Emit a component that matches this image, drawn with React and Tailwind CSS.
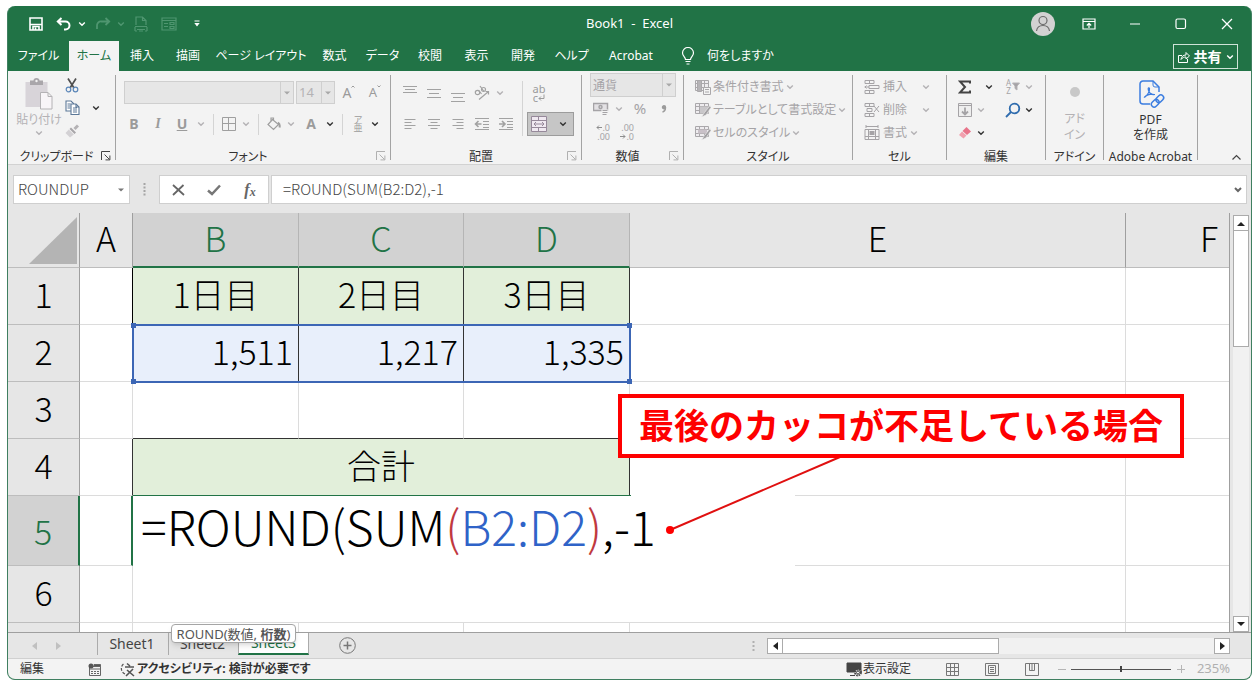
import React from "react";

const G = "#b4b2b5";

function Svg({ w = 16, h = 16, color = G, sw = 1, children }) {
  return (
    <svg
      width={w}
      height={h}
      viewBox={`0 0 ${w} ${h}`}
      fill="none"
      stroke={color}
      strokeWidth={sw}
      className="shrink-0"
      aria-hidden="true"
    >
      {children}
    </svg>
  );
}

function Chevron({ color = G }) {
  return (
    <Svg w={8} h={6} color={color} sw={1.4}>
      <path d="M1.2 1.4 4 4.2 6.8 1.4" />
    </Svg>
  );
}

function Caret({ color = "#a8a8a8" }) {
  return (
    <svg width="6" height="4" viewBox="0 0 6 4" className="shrink-0" aria-hidden="true">
      <path d="M0 0.500h6L3 3.500z" fill={color} />
    </svg>
  );
}

function Tool({ w, label, children }) {
  return (
    <button type="button" aria-label={label} className={`flex h-full shrink-0 items-center justify-center ${w}`}>
      {children}
    </button>
  );
}

function Divider({ w }) {
  return (
    <span className={`flex h-[21px] shrink-0 justify-center ${w}`}>
      <span className="h-full w-px bg-[#d4d4d4]" />
    </span>
  );
}

function Group({ width, label, launcher, children }) {
  return (
    <section aria-label={label} className={`my-1 flex shrink-0 flex-col border-r border-[#a3a3a3] ${width}`}>
      <div className="h-[74px]">{children}</div>
      <div className="flex h-[11px] items-center text-xs leading-[11px] whitespace-nowrap text-[#333]">
        <span className={`flex flex-1 justify-center pt-1 ${launcher ? "pl-1" : ""}`}>{label}</span>
        {launcher && (
          <button type="button" aria-label="詳細設定" className="w-[14px] pt-0.5">
            <Svg w={10} h={10} color={launcher}>
              <path d="M0.5 9V0.5H9M3.5 3.5l5 5M8.9 4.5v4.4H4.5" />
            </Svg>
          </button>
        )}
      </div>
    </section>
  );
}

/* ---------- title bar ---------- */

function TitleBar() {
  return (
    <header className="grid h-[35px] grid-cols-[1fr_auto_1fr] items-center text-white">
      <div className="flex items-center pl-5">
        <Tool w="w-4" label="上書き保存">
          <Svg w={14} h={14} color="#fff" sw={1.6}>
            <path d="M1 1h12v12H1zM1.500 7.500h11" />
            <path d="M4 13v-3.500h6V13M6.500 10.500V13" />
          </Svg>
        </Tool>
        <Tool w="ml-3 w-4" label="元に戻す">
          <Svg w={16} h={14} color="#fff" sw={2}>
            <path d="M5.5 1 1.8 4.5 5.5 8M2 4.5h7.5a4 4 0 0 1 0 8H8" />
          </Svg>
        </Tool>
        <Tool w="w-[19px]" label="元に戻す一覧"><Chevron color="#fff" /></Tool>
        <Tool w="ml-1 w-4" label="やり直し">
          <Svg w={16} h={14} color="#4f9670" sw={1.8}>
            <path d="M10.5 1l3.700 3.500L10.500 8M14 4.500H6.500a4 4 0 0 0-4.500 4.500v3" />
          </Svg>
        </Tool>
        <Tool w="w-[19px]" label="やり直し一覧"><Chevron color="#4f9670" /></Tool>
        <Tool w="ml-[3px] w-4" label="印刷プレビュー">
          <Svg w={14} h={16} color="#4f9670" sw={1.2}>
            <path d="M2 9V1h6.500L12 4.500V9M8.500 1v3.500H12M1 10.500h12M3 13.500h8M1 15h2M5 15h4M11 15h2M1 11v4M13 11v4" />
          </Svg>
        </Tool>
        <Tool w="ml-3 w-4" label="フォーム">
          <Svg w={16} h={14} color="#4f9670" sw={1.2}>
            <path d="M1 1h14v12H1zM1 3.500h14M3 6.500h4M3 9.500h4M9 5.500h4v2H9zM9 9.500h4v2H9z" />
          </Svg>
        </Tool>
        <Tool w="ml-3 w-4" label="クイック アクセスのカスタマイズ">
          <Svg w={6} h={7} color="#fff" sw={1.2}>
            <path d="M0.500 1h5M1.500 3.500h3L3 5.500z" fill="#fff" />
          </Svg>
        </Tool>
      </div>
      <h1 className="text-[13px] whitespace-pre">Book1  -  Excel</h1>
      <div className="flex h-full items-center justify-end pr-[15px]">
        <Tool w="w-6" label="アカウント">
          <Svg w={24} h={24} color="#6b6b6b" sw={1.2}>
            <circle cx="12" cy="12" r="12" fill="#d2d2d2" stroke="none" />
            <circle cx="12" cy="8.500" r="4" />
            <path d="M5.500 19c.5-4 3-5.500 6.500-5.500s6 1.500 6.500 5.500" />
          </Svg>
        </Tool>
        <Tool w="ml-[25px] w-[18px]" label="リボンの表示オプション">
          <Svg w={14} h={12} color="#fff" sw={1.2}>
            <path d="M1 1h12v10H1zM1 3.500h12M7 10V5.500M4.800 7.500 7 5.300l2.200 2.200" />
          </Svg>
        </Tool>
        <Tool w="ml-7 w-[18px]" label="最小化">
          <Svg w={12} h={12} color="#fff" sw={1.2}><path d="M1 6h10" /></Svg>
        </Tool>
        <Tool w="ml-7 w-[18px]" label="最大化">
          <Svg w={12} h={12} color="#fff" sw={1.2}><rect x="1" y="1" width="9.500" height="9.500" rx="1.500" /></Svg>
        </Tool>
        <Tool w="ml-7 w-[18px]" label="閉じる">
          <Svg w={12} h={12} color="#fff" sw={1.3}><path d="M1 1l10 10M11 1 1 11" /></Svg>
        </Tool>
      </div>
    </header>
  );
}

const TABS = [
  ["ファイル", "w-[61px]"],
  ["ホーム", "w-[50px]"],
  ["挿入", "w-[46px]"],
  ["描画", "w-[46px]"],
  ["ページ レイアウト", "w-[100px]"],
  ["数式", "w-[47px]"],
  ["データ", "w-[49px]"],
  ["校閲", "w-[46px]"],
  ["表示", "w-[47px]"],
  ["開発", "w-[46px]"],
  ["ヘルプ", "w-[51px]"],
  ["Acrobat", "w-[68px]"],
];

function RibbonTabs() {
  return (
    <nav className="-ml-px flex h-[30px] items-stretch pl-px text-xs whitespace-nowrap text-white">
      {TABS.map(([t, w]) => (
        <button
          key={t}
          type="button"
          className={`flex shrink-0 items-center justify-center ${w} ${t === "ホーム" ? "bg-[#f3f3f3] text-[#217346]" : ""}`}
        >
          {t}
        </button>
      ))}
      <button type="button" className="ml-4 flex items-center gap-3">
        <Svg w={14} h={18} color="#fff" sw={1.2}>
          <path d="M4.500 12.500c0-2.500-3-3.500-3-6.500a5.500 5.500 0 0 1 11 0c0 3-3 4-3 6.500zM4.500 14.500h5M5.500 17h3" />
        </Svg>
        何をしますか
      </button>
      <button
        type="button"
        className="mt-[3px] mr-[13px] mb-[2px] ml-auto flex w-[65px] items-center justify-center gap-1 border border-[#cfe3d7] text-sm font-bold"
      >
        <Svg w={12} h={12} color="#fff">
          <path d="M4 4.500H0.500v7h9V8M3 8.500c.5-3 2-4.500 5-4.500V1.500L11.500 5 8 8V6C6 6 4.500 6.500 3 8.500z" />
        </Svg>
        共有
        <Chevron color="#fff" />
      </button>
    </nav>
  );
}

/* ---------- ribbon ---------- */

function ClipboardGroup() {
  return (
    <Group width="w-[108px]" label="クリップボード" launcher="#444">
      <div className="flex pl-[9px] text-[#b4b2b5]">
        <button type="button" className="flex w-[44px] flex-col items-center pt-[3px] text-xs whitespace-nowrap">
          <Svg w={30} h={32} color="#b4b2b5">
            <path d="M1.500 4h22v25h-22z" fill="#d8d4d9" stroke="none" />
            <path d="M6 2.500h3.500a3 2.500 0 0 1 6 0H19V7H6z" fill="#a9a6aa" stroke="none" />
            <circle cx="12.500" cy="3" r="1.200" fill="#f3f3f3" stroke="none" />
            <path d="M16.500 14.500h7.500l4 4V31H16.500zM24 14.500v4h4" fill="#f8f5f8" />
          </Svg>
          <span className="leading-[20px]">貼り付け</span>
          <Chevron />
        </button>
        <div className="flex flex-col">
          <div className="flex h-[20px] pl-[3px]">
            <Tool w="w-4" label="切り取り">
              <Svg w={14} h={15} color="#505050" sw={1.7}>
                <path d="M3 0.500l6 9.500M11 0.500 5 10" />
                <circle cx="3.500" cy="11.500" r="2.300" stroke="#5b86b8" strokeWidth="1.200" />
                <circle cx="10.500" cy="11.500" r="2.300" stroke="#5b86b8" strokeWidth="1.200" />
              </Svg>
            </Tool>
          </div>
          <div className="flex h-[25px] pl-[3px]">
            <Tool w="w-4" label="コピー">
              <Svg w={15} h={15} color="#5c7898" sw={1.1}>
                <path d="M1 1h5l2.500 2.500V11H1z" fill="#fff" />
                <path d="M6 4h5l3 3v7.500H6z" fill="#fff" />
                <path d="M2.500 4h3M2.500 6h3M2.500 8h3M8 8h4M8 10h4M8 12h4M11 4v3h3" />
              </Svg>
            </Tool>
            <Tool w="ml-2 w-4" label="コピーの種類"><Chevron color="#333" /></Tool>
          </div>
          <div className="flex h-[22px] pl-[3px]">
            <Tool w="w-4" label="書式のコピー">
              <Svg w={14} h={14}>
                <path d="M13 1.500 9.500 5" strokeWidth="3" />
                <path d="M6 3.500l5 5-1.500 1.500-5-5z" fill="#a8a6a9" stroke="none" />
                <path d="M3.800 5.500l5 5L5 13.500 0.500 9z" fill="#d3d1d4" stroke="none" />
              </Svg>
            </Tool>
          </div>
        </div>
      </div>
    </Group>
  );
}

function FontGroup() {
  return (
    <Group width="w-[275px]" label="フォント" launcher="#b0b0b0">
      <div className="flex flex-col gap-2 pt-[6px]">
        <div className="flex h-[23px] gap-[2px] pl-2 text-[#b4b2b5]">
          <button type="button" aria-label="フォント名" className="flex w-[170px] items-stretch justify-end border border-[#cfcfcf] bg-[#e6e6e6]">
            <span className="flex w-[13px] items-center justify-center border-l border-[#cfcfcf]"><Caret /></span>
          </button>
          <button type="button" aria-label="フォント サイズ" className="flex w-[39px] items-stretch justify-between border border-[#cfcfcf] bg-[#e6e6e6] pl-[2px] text-[13px] leading-[21px]">
            14
            <span className="flex w-[13px] items-center justify-center border-l border-[#cfcfcf]"><Caret /></span>
          </button>
          <Tool w="w-6 text-sm text-[#9b9b9b]" label="フォント サイズの拡大">
            A<span className="mb-3"><Svg w={4} h={3} color="#9b9b9b"><path d="M0.500 2.500 2 1l1.500 1.500" /></Svg></span>
          </Tool>
          <Tool w="w-6 text-[13px] text-[#9b9b9b]" label="フォント サイズの縮小">
            A<span className="mb-3"><Svg w={4} h={3} color="#9b9b9b"><path d="M0.500 0.500 2 2l1.500-1.500" /></Svg></span>
          </Tool>
        </div>
        <div className="flex h-6 items-center pl-[6px] text-sm text-[#9b9b9b]">
          <Tool w="w-6 font-bold" label="太字">B</Tool>
          <Tool w="w-6 font-bold italic font-['Liberation_Serif',serif]" label="斜体">I</Tool>
          <Tool w="w-6 font-bold underline" label="下線">U</Tool>
          <Tool w="w-[14px]" label="下線の種類"><Chevron /></Tool>
          <Divider w="w-[10px]" />
          <Tool w="w-[22px]" label="罫線">
            <Svg w={14} h={14} color="#9f9f9f"><path d="M0.500 0.500h13v13H0.500zM6.500 0.500v13M0.500 6.500h13" /></Svg>
          </Tool>
          <Tool w="w-3" label="罫線の種類"><Chevron /></Tool>
          <Divider w="w-3" />
          <Tool w="w-5" label="塗りつぶしの色">
            <Svg w={14} h={14} color="#9f9f9f" sw={1.2}>
              <path d="M5.500 2.500l6 5-5 5L1 7.500zM4 4V1h2.500v3" />
              <path d="M11 5.500c1.500 1 2 3 1.500 5" strokeWidth="2" />
            </Svg>
          </Tool>
          <Tool w="w-[14px]" label="塗りつぶしの色一覧"><Chevron /></Tool>
          <Tool w="w-[26px] font-bold" label="フォントの色">A</Tool>
          <Tool w="w-3" label="フォントの色一覧"><Chevron color="#333" /></Tool>
          <Divider w="w-3" />
          <Tool w="w-5 flex-col text-[9px] leading-[8px]" label="ふりがな"><span>ア</span><span>亜</span></Tool>
          <Tool w="w-[14px]" label="ふりがなの設定"><Chevron color="#333" /></Tool>
        </div>
      </div>
    </Group>
  );
}

function AlignmentGroup() {
  const c = "#a2a2a2";
  return (
    <Group width="w-[191px]" label="配置" launcher="#b0b0b0">
      <div className="flex pt-[6px] pl-[7px]">
        <div className="flex flex-col gap-2">
          <div className="flex h-[23px]">
            <Tool w="w-6" label="上揃え"><Svg h={18} color={c}><path d="M1 2.500h14M3 5.500h10M1 8.500h14" /></Svg></Tool>
            <Tool w="w-6" label="上下中央揃え"><Svg h={18} color={c}><path d="M1 5.500h14M3 9.500h10M1 13.500h14" /></Svg></Tool>
            <Tool w="w-6" label="下揃え"><Svg h={18} color={c}><path d="M1 9.500h14M3 13.500h10M1 17.500h14" /></Svg></Tool>
            <Tool w="w-6" label="方向">
              <Svg color={c} sw={1.2}>
                <circle cx="3.500" cy="7.500" r="2.200" /><path d="M4.500 5l3 4M6 1l4 5.500" />
                <circle cx="9.500" cy="4.500" r="2" /><path d="M5 14.500 14.500 6.500M11.500 6.500h3v3" />
              </Svg>
            </Tool>
            <Tool w="w-3" label="方向一覧"><Chevron /></Tool>
          </div>
          <div className="flex h-6">
            <Tool w="w-6" label="左揃え"><Svg color={c}><path d="M2.500 3.500h11M2.500 6.500h7M2.500 9.500h11M2.500 12.500h7" /></Svg></Tool>
            <Tool w="w-6" label="中央揃え"><Svg color={c}><path d="M2 3.500h12M4.500 6.500h7M2 9.500h12M4.500 12.500h7" /></Svg></Tool>
            <Tool w="w-6" label="右揃え"><Svg color={c}><path d="M2.500 3.500h11M6.500 6.500h7M2.500 9.500h11M6.500 12.500h7" /></Svg></Tool>
            <Tool w="w-6" label="インデントを減らす">
              <Svg color={c}><path d="M1 2.500h14M9 5.500h6M9 8.500h6M9 11.500h6M1 13.500h14" /><path d="M1.500 8h6M4.500 5 1.500 8l3 3" strokeWidth="1.600" /></Svg>
            </Tool>
            <Tool w="w-6" label="インデントを増やす">
              <Svg color={c}><path d="M1 2.500h14M9 5.500h6M9 8.500h6M9 11.500h6M1 13.500h14" /><path d="M1 8h6M4 5l3 3-3 3" strokeWidth="1.600" /></Svg>
            </Tool>
          </div>
        </div>
        <div className="ml-1 w-px bg-[#d4d4d4]" />
        <div className="ml-1 flex flex-col gap-2">
          <div className="flex h-[23px]">
            <Tool w="w-6 flex-col text-[11px] leading-[9px] text-[#9b9b9b]" label="折り返して全体を表示する">
              <span>ab</span>
              <span className="flex items-center">c<Svg w={7} h={7} color="#9b9b9b"><path d="M6 0.500v4H1M3 2.500l-2 2 2 2" /></Svg></span>
            </Tool>
          </div>
          <button type="button" aria-label="セルを結合して中央揃え" className="flex h-6 w-[47px] items-center gap-3 border border-[#9c9c9c] bg-[#c6c6c6] pl-[3px]">
            <Svg color="#96899a"><path d="M0.500 0.500h15v15H0.500zM0.500 4.500h15M0.500 11.500h15M7.500 0.500v4M7.500 11.500v4" fill="#f0e9f1" /><path d="M3 8h10M5 6 3 8l2 2M11 6l2 2-2 2" /></Svg>
            <Chevron color="#333" />
          </button>
        </div>
      </div>
    </Group>
  );
}

function NumberGroup() {
  return (
    <Group width="w-[102px]" label="数値" launcher="#b0b0b0">
      <div className="-mt-[2px] pl-2 text-[#a5a3a6]">
        <button type="button" aria-label="数値の書式" className="flex h-6 w-[86px] items-stretch justify-between border border-[#cfcfcf] bg-[#e6e6e6] pl-[2px] text-xs leading-[24px]">
          通貨
          <span className="flex w-[13px] items-center justify-center border-l border-[#cfcfcf]"><Caret /></span>
        </button>
        <div className="flex h-[23px] pl-[2px]">
          <Tool w="w-[18px]" label="通貨表示形式">
            <Svg color="#a5a3a6"><path d="M0.500 2.500h14v7h-14z" fill="#e3e1e4" strokeWidth="1.500" /><circle cx="7.500" cy="6" r="1.500" strokeWidth="1.500" /><path d="M8.500 8.500h7v6h-7z" fill="#f3f3f3" stroke="none" /><path d="M9.500 9.500h5M9.500 11.500h5M9.500 13.500h4" /></Svg>
          </Tool>
          <Tool w="w-[18px]" label="通貨一覧"><Chevron /></Tool>
          <Tool w="w-6 text-[15px]" label="パーセント スタイル">%</Tool>
          <Tool w="w-6" label="桁区切りスタイル">
            <Svg w={6} h={8} color="#9b9b9b" sw={1.4}><circle cx="3" cy="2.200" r="1.500" fill="#9b9b9b" /><path d="M4.500 2.500C4.500 5 3.500 6.500 1.500 7.200" /></Svg>
          </Tool>
        </div>
        <div className="flex h-[23px] text-[9px] leading-[9px]">
          <Tool w="w-6 flex-col items-end pr-1" label="小数点以下の表示桁数を増やす">
            <span className="flex items-center"><Svg w={6} h={5} color="#8d8d8d"><path d="M6 2.500H1M3 0.500l-2 2 2 2" /></Svg>.0</span><span>.00</span>
          </Tool>
          <Tool w="w-6 flex-col items-end pr-1" label="小数点以下の表示桁数を減らす">
            <span>.00</span><span className="flex items-center"><Svg w={6} h={5} color="#8d8d8d"><path d="M0 2.500h5M3 0.500l2 2-2 2" /></Svg>.0</span>
          </Tool>
        </div>
      </div>
    </Group>
  );
}

function GridIcon({ kind }) {
  return (
    <Svg color="#aaa8ab">
      <path d="M0.500 1.500h13v10H0.500zM0.500 4.500h13M0.500 8.500h13M4.500 1.500v10M9.500 1.500v10" fill="#eeecef" />
      {kind === "cond" && (
        <>
          <path d="M2.500 1.500h4v11h-4z" fill="#b5b3b6" />
          <path d="M8.500 8.500h7v7h-7z" fill="#f3f3f3" /><path d="M10 10.500h4M10 13h4" />
        </>
      )}
      {kind === "table" && <path d="M5 4.500h8.500v7H5z" fill="#c9c7ca" stroke="none" />}
      {kind === "cell" && <path d="M3 4.500h9v4H3z" fill="#c9c1c8" stroke="none" />}
      {kind !== "cond" && <path d="M15 3.500 9.500 10.500l-3 4.500 4.500-2L16 5.500z" fill="#a19fa2" stroke="#f3f3f3" strokeWidth="0.600" />}
    </Svg>
  );
}

function StylesGroup() {
  return (
    <Group width="w-[169px]" label="スタイル">
      {[["cond", "条件付き書式"], ["table", "テーブルとして書式設定"], ["cell", "セルのスタイル"]].map(([k, t]) => (
        <button key={k} type="button" className="flex h-[23px] items-center gap-[2px] pl-[11px] text-xs whitespace-nowrap text-[#a5a3a6]">
          <GridIcon kind={k} />
          {t}
          <Chevron />
        </button>
      ))}
    </Group>
  );
}

function CellsGroup() {
  const c = "#a5a3a6";
  const icons = [
    <path key="i" d="M1 1.500h9v3H1zM5.500 1.500v3M5 6.500h10v3H5zM1 11.500h9v3H1zM5.500 11.500v3M5 8H0.500M2.500 6.500 1 8l1.500 1.500" />,
    <path key="d" d="M1 1.500h9v3H1zM5.500 1.500v3M3 6.500h5v3H3zM1 11.500h9v3H1zM5.500 11.500v3M10 4l5 6M15 4l-5 6" />,
    <g key="f"><path d="M2 1.500h12M2 0v3M14 0v3M1 4.500h14v10H1zM1 11.500h14M4.500 4.500v10M11.500 4.500v10" /><path d="M5.500 6h5v4h-5z" fill={c} stroke="none" /></g>,
  ];
  return (
    <Group width="w-[94px]" label="セル">
      {["挿入", "削除", "書式"].map((t, i) => (
        <button key={t} type="button" className="flex h-[23px] items-center gap-[3px] pl-[11px] text-xs text-[#a5a3a6]">
          <Svg color={c}>{icons[i]}</Svg>
          {t}
          <span className={i === 2 ? "" : "pl-3"}><Chevron /></span>
        </button>
      ))}
    </Group>
  );
}

function EditingGroup() {
  return (
    <Group width="w-[99px]" label="編集">
      <div className="flex h-[23px] pl-[10px]">
        <Tool w="w-4" label="オート SUM"><Svg w={14} h={14} color="#444" sw={2}><path d="M12 3.500V1.500H2L7 7l-5 5.500h10v-2" /></Svg></Tool>
        <Tool w="w-8" label="オート SUM 一覧"><Chevron color="#333" /></Tool>
        <Tool w="w-4 gap-px text-[8px] leading-[8px] text-[#a5a3a6]" label="並べ替えとフィルター">
          <span className="flex flex-col"><span>A</span><span>Z</span></span>
          <Svg w={8} h={10}><path d="M0.500 1h7L5 4v4L3 6.500V4z" fill="#a5a3a6" /></Svg>
        </Tool>
        <Tool w="w-4" label="並べ替え一覧"><Chevron /></Tool>
      </div>
      <div className="flex h-[23px] pl-[10px]">
        <Tool w="w-4" label="フィル"><Svg w={14} h={14} color="#a5a3a6"><path d="M0.500 0.500h13v13H0.500zM0.500 2.500h13" fill="#eee" /><path d="M7 4.500v7M4 8.500l3 3 3-3" strokeWidth="1.800" /></Svg></Tool>
        <Tool w="w-4" label="フィル一覧"><Chevron /></Tool>
        <Tool w="ml-4 w-4" label="検索と選択"><Svg color="#2f6cae" sw={1.8}><circle cx="9.500" cy="6.500" r="4.800" /><path d="M6 10 1 15" /></Svg></Tool>
        <Tool w="w-4" label="検索一覧"><Chevron color="#333" /></Tool>
      </div>
      <div className="flex h-[23px] pl-[10px]">
        <Tool w="w-4" label="クリア"><Svg w={14} h={14} color="none"><path d="M8.500 1 13 5.500 9 9 4.500 5z" fill="#e8748a" /><path d="M4 5.500 8.500 9.500 5.500 12.500 1 9z" fill="#f1a0ae" /></Svg></Tool>
        <Tool w="w-4" label="クリア一覧"><Chevron color="#333" /></Tool>
      </div>
    </Group>
  );
}

function Ribbon() {
  return (
    <div className="flex border-b border-[#d2d2d2] bg-[#f3f3f3]">
      <ClipboardGroup />
      <FontGroup />
      <AlignmentGroup />
      <NumberGroup />
      <StylesGroup />
      <CellsGroup />
      <EditingGroup />
      <Group width="w-[58px]" label="アドイン">
        <button type="button" className="flex w-full flex-col items-center pt-3 text-xs leading-4 text-[#b4b2b5]">
          <span className="mb-[14px] size-[10px] rounded-full bg-[#c8c8c8]" />
          アド<br />イン
        </button>
      </Group>
      <Group width="w-[94px]" label="Adobe Acrobat">
        <button type="button" className="flex w-full flex-col items-center pt-[5px] text-xs leading-[15px] text-[#333]">
          <span className="mb-[3px] pl-1">
            <Svg w={27} h={29} color="#3b7de0" sw={1.5}>
              <path d="M11 24H4a3 3 0 0 1-3-3V4a3 3 0 0 1 3-3h10l6 6v5" />
              <path d="M14 1v4a2 2 0 0 0 2 2h4" strokeWidth="1" />
              <path d="M5 17.500c3-1 6-6.500 5.500-9C10 7 8.500 8 9.500 10.500c1 3 3.500 4.500 6.500 4M5 17.500c1.500-2 6-4 10-3" strokeWidth="1.200" />
              <g transform="translate(18.500 21) rotate(-45)">
                <rect x="-7.500" y="-2.800" width="8.500" height="5.600" rx="2.800" />
                <rect x="-1" y="-2.800" width="8.500" height="5.600" rx="2.800" />
              </g>
            </Svg>
          </span>
          PDF<br />を作成
        </button>
      </Group>
      <button type="button" aria-label="リボンを折りたたむ" className="mr-[10px] mb-[3px] ml-auto self-end">
        <Svg w={9} h={7} color="#444" sw={1.2}><path d="M0.500 5.500 4.500 1.500l4 4" /></Svg>
      </button>
    </div>
  );
}

/* ---------- formula bar ---------- */

function FormulaBar() {
  return (
    <div className="flex bg-[#e6e6e6] pt-[10px] pr-1 pb-[9px] pl-[5px] text-[#444] [font-feature-settings:normal]">
      <div className="flex h-[29px] w-[117px] shrink-0 items-center border border-[#cfcfcf] bg-white pr-[5px]">
        <input aria-label="名前ボックス" defaultValue="ROUNDUP" className="w-full min-w-0 bg-transparent pl-1 font-['Noto_Sans_CJK_JP',sans-serif] text-[15px] font-light outline-none" />
        <Caret color="#777" />
      </div>
      <span className="flex w-[29px] shrink-0 items-center justify-center">
        <Svg w={3} h={13} color="none"><path d="M0.500 0h2v2h-2zM0.500 3.500h2v2h-2zM0.500 7h2v2h-2zM0.500 10.500h2v2h-2z" fill="#a5a5a5" /></Svg>
      </span>
      <div className="flex h-[29px] w-[110px] shrink-0 items-center border border-[#cfcfcf] bg-white">
        <Tool w="w-9" label="キャンセル"><Svg w={13} h={12} color="#666" sw={1.8}><path d="M1 1l11 10M11.500 1 1 11" /></Svg></Tool>
        <Tool w="w-9" label="入力"><Svg w={14} h={12} color="#777" sw={2.5}><path d="M1 6.500 5 10l8-8.500" /></Svg></Tool>
        <Tool w="w-9 font-['Liberation_Serif',serif] text-base font-bold italic text-[#666]" label="関数の挿入">f<span className="pt-1 text-xs">x</span></Tool>
      </div>
      <div className="ml-[2px] flex h-[29px] flex-1 items-center border border-[#cfcfcf] bg-white pr-1">
        <input aria-label="数式バー" defaultValue="=ROUND(SUM(B2:D2),-1" className="min-w-0 flex-1 bg-transparent pl-[11px] font-['Noto_Sans_CJK_JP',sans-serif] text-[15px] font-light outline-none" />
        <Svg w={8} h={6} color="#666" sw={2}><path d="M1 1l3 3 3-3" /></Svg>
      </div>
    </div>
  );
}

/* ---------- sheet ---------- */

const GRID = "border-r border-b border-[#dcdcdc]";
const HEAD = "border-r border-b border-r-[#9f9f9f] border-b-[#bdbdbd] bg-[#e6e6e6] p-0 pb-1 font-light";

function RowHead({ n, active }) {
  return (
    <th
      scope="row"
      className={active ? "border-r-2 border-b border-r-[#217346] border-b-[#bdbdbd] bg-[#d2d2d2] p-0 font-light text-[#217346]" : HEAD}
    >
      {n}
    </th>
  );
}

function Sheet() {
  return (
    <div className="flex bg-[#e6e6e6] [font-feature-settings:normal]">
      <div className="relative h-[419px] min-w-0 flex-1 overflow-hidden border-r border-[#9f9f9f] bg-white">
        <table className="w-full table-fixed border-separate border-spacing-0 font-['Noto_Sans_CJK_JP',sans-serif] text-[34px] leading-[50px] font-light text-black">
          <colgroup>
            <col className="w-[72px]" />
            <col className="w-[53px]" />
            <col className="w-[166px]" />
            <col className="w-[165px]" />
            <col className="w-[166px]" />
            <col />
            <col className="w-[103px]" />
          </colgroup>
          <thead>
            <tr className="h-[55px]">
              <th className="border-r border-b border-r-[#9f9f9f] border-b-[#bdbdbd] bg-[#e6e6e6] p-0">
                <svg width="50" height="49" className="ml-5" aria-hidden="true"><path d="M49 1v47H1z" fill="#b4b4b4" /></svg>
              </th>
              <th className={HEAD}>A</th>
              {["B", "C", "D"].map((c) => (
                <th key={c} className="border-r border-b-2 border-r-[#b5b5b5] border-b-[#217346] bg-[#d2d2d2] p-0 pb-[3px] font-light text-[#217346]">{c}</th>
              ))}
              <th className={HEAD}>E</th>
              <th className="overflow-hidden border-b border-[#bdbdbd] bg-[#e6e6e6] p-0 pb-1 font-light"><div className="w-[166px]">F</div></th>
            </tr>
          </thead>
          <tbody>
            <tr className="h-[57px]">
              <RowHead n={1} />
              <td className="border-r border-b border-r-black border-b-[#dcdcdc]" />
              {["1日目", "2日目", "3日目"].map((t) => (
                <td key={t} className="border-r border-b border-[#333] bg-[#e2efda] p-0 pb-1 text-center">{t}</td>
              ))}
              <td className={GRID} />
              <td className="border-b border-[#dcdcdc]" />
            </tr>
            <tr className="h-[57px]">
              <RowHead n={2} />
              <td className={GRID} />
              {["1,511", "1,217", "1,335"].map((t) => (
                <td key={t} className="border-r border-b border-[#333] bg-[#e8effb] p-0 pr-[5px] pb-1 text-right">{t}</td>
              ))}
              <td className={GRID} />
              <td className="border-b border-[#dcdcdc]" />
            </tr>
            <tr className="h-[57px]">
              <RowHead n={3} />
              <td className={GRID} />
              {["B", "C", "D"].map((c) => (
                <td key={c} className="border-r border-b border-r-[#dcdcdc] border-b-[#333]" />
              ))}
              <td className={GRID} />
              <td className="border-b border-[#dcdcdc]" />
            </tr>
            <tr className="h-[57px]">
              <RowHead n={4} />
              <td className="border-r border-b border-r-[#333] border-b-[#dcdcdc]" />
              <td colSpan={3} className="border-r border-b border-r-[#333] border-b-[#217346] bg-[#e2efda] p-0 pb-1 text-center">合計</td>
              <td className={GRID} />
              <td className="border-b border-[#dcdcdc]" />
            </tr>
            <tr className="h-[70px]">
              <RowHead n={5} active />
              <td className="border-r-2 border-b border-r-[#217346] border-b-[#dcdcdc]" />
              <td colSpan={3} />
              <td className={GRID} />
              <td className="border-b border-[#dcdcdc]" />
            </tr>
            <tr className="h-[57px]">
              <RowHead n={6} />
              <td className={GRID} />
              <td colSpan={3} className="border-b border-[#dcdcdc]" />
              <td className={GRID} />
              <td className="border-b border-[#dcdcdc]" />
            </tr>
            <tr className="h-[9px]">
              <th className="border-r border-[#9f9f9f] bg-[#e6e6e6] p-0" />
              <td className="border-r border-[#dcdcdc]" />
              <td className="border-r border-[#dcdcdc]" />
              <td className="border-r border-[#dcdcdc]" />
              <td className="border-r border-[#dcdcdc]" />
              <td className="border-r border-[#dcdcdc]" />
              <td />
            </tr>
          </tbody>
        </table>

        {/* range outline for B2:D2 */}
        <div className="pointer-events-none absolute top-[111px] left-[124px] h-[59px] w-[499px] border-2 border-[#3c66b5]">
          <span className="absolute -top-[3px] -left-[3px] size-[5px] bg-[#3c66b5]" />
          <span className="absolute -top-[3px] -right-[3px] size-[5px] bg-[#3c66b5]" />
          <span className="absolute -bottom-[3px] -left-[3px] size-[5px] bg-[#3c66b5]" />
          <span className="absolute -right-[3px] -bottom-[3px] size-[5px] bg-[#3c66b5]" />
        </div>

        {/* in-cell editor for B5, keeping the lower edge of B4:D4 visible */}
        <div
          role="textbox"
          aria-label="B5"
          className="absolute top-[282px] left-[125px] h-[71px] w-[662px] bg-white pl-2 font-['Noto_Sans_CJK_JP',sans-serif] text-[48px] leading-[60px] font-light whitespace-nowrap text-black before:absolute before:top-0 before:left-0 before:h-px before:w-[498px] before:bg-[#217346]"
        >
          =ROUND(SUM<span className="text-[#c0393f]">(</span><span className="text-[#2f63c8]">B2:D2</span><span className="text-[#c0393f]">)</span>,-1
        </div>

        {/* callout */}
        <svg className="pointer-events-none absolute top-[240px] left-[655px]" width="185" height="84" aria-hidden="true">
          <path d="M177 4 7 77" stroke="#e01010" strokeWidth="2" />
          <circle cx="7" cy="77" r="4" fill="#fe0000" />
        </svg>
        <div className="absolute top-[181px] left-[610px] flex h-[64px] w-[566px] items-center justify-center border-4 border-[#fe0000] bg-white pb-1 font-['Noto_Sans_CJK_JP',sans-serif] text-[35px] leading-[50px] font-bold whitespace-nowrap text-[#fe0000]">
          最後のカッコが不足している場合
        </div>
      </div>

      <div className="flex w-[21px] shrink-0 flex-col items-center pt-[2px]">
        <button type="button" aria-label="上へスクロール" className="flex h-4 w-4 items-center justify-center border border-[#ababab] bg-white">
          <svg width="8" height="5" aria-hidden="true"><path d="M0 5 4 1l4 4z" fill="#222" /></svg>
        </button>
        <div className="w-4 flex-1 bg-[#f1f1f1]"><div className="-mt-px h-[117px] border border-[#ababab] bg-white" /></div>
        <button type="button" aria-label="下へスクロール" className="flex h-4 w-4 items-center justify-center border border-[#ababab] bg-white">
          <svg width="8" height="5" aria-hidden="true"><path d="M0 0h8L4 4z" fill="#222" /></svg>
        </button>
      </div>
    </div>
  );
}

/* ---------- sheet tabs ---------- */

function SheetTabs() {
  return (
    <div className="relative flex h-[26px] items-stretch border-t border-[#9f9f9f] bg-[#e6e6e6] text-sm text-[#444]">
      <div className="flex w-[89px] shrink-0 items-center gap-[19px] pl-6">
        <svg width="5" height="8" aria-hidden="true"><path d="M5 0v8L0 4z" fill="#c0c0c0" /></svg>
        <svg width="5" height="8" aria-hidden="true"><path d="M0 0v8l5-4z" fill="#c0c0c0" /></svg>
      </div>
      <div className="flex h-[22px] items-stretch">
        <button type="button" className="w-[71px] border-l border-[#ababab] pr-0.5">Sheet1</button>
        <button type="button" className="w-[70px] border-l border-[#ababab] pr-0.5">Sheet2</button>
        <button type="button" className="w-[71px] border-r border-b-2 border-l border-r-[#ababab] border-b-[#217346] border-l-[#ababab] bg-white text-[#217346]">Sheet3</button>
      </div>
      <button type="button" aria-label="新しいシート" className="ml-[30px] self-center">
        <Svg w={17} h={17} color="#777"><circle cx="8.500" cy="8.500" r="7.800" /><path d="M8.500 4.500v8M4.500 8.500h8" strokeWidth="1.500" /></Svg>
      </button>
      <div className="ml-auto flex h-4 items-stretch self-center pr-[21px]">
        <Svg w={3} h={16} color="none"><path d="M0.500 3h2v2h-2zM0.500 7h2v2h-2zM0.500 11h2v2h-2z" fill="#b0b0b0" /></Svg>
        <button type="button" aria-label="左へスクロール" className="ml-3 flex w-4 items-center justify-center border border-[#ababab] bg-white">
          <svg width="5" height="8" aria-hidden="true"><path d="M5 0v8L0 4z" fill="#222" /></svg>
        </button>
        <div className="flex w-[431px] bg-[#f1f1f1]"><div className="-ml-px w-[217px] border border-[#ababab] bg-white" /></div>
        <button type="button" aria-label="右へスクロール" className="flex w-4 items-center justify-center border border-[#ababab] bg-white">
          <svg width="5" height="8" aria-hidden="true"><path d="M0 0v8l5-4z" fill="#222" /></svg>
        </button>
      </div>
      <div role="tooltip" className="absolute -top-[9px] left-[163px] flex h-[19px] w-[125px] items-center justify-center rounded border border-[#a5a5a5] bg-white text-[13px] leading-4 whitespace-pre text-[#555] shadow-md">
        ROUND(数値, <b>桁数</b>)
      </div>
    </div>
  );
}

/* ---------- status bar ---------- */

function StatusBar() {
  return (
    <footer className="flex h-[21px] items-center border-t border-[#d0d0d0] bg-[#f3f3f3] pr-[21px] pl-3 text-xs whitespace-nowrap text-[#333]">
      <span className="w-[68px]">編集</span>
      <Svg w={13} h={13} color="#666"><path d="M1.500 3.500h11v9h-11zM1.500 6h11M3 8.500h2M6 8.500h2M9 8.500h2M3 10.500h2M6 10.500h2M9 10.500h2" /><circle cx="3" cy="3" r="2.500" fill="#555" stroke="none" /><path d="M6 1.500h6.500v2H6z" fill="#555" /></Svg>
      <button type="button" className="ml-[18px] flex items-center gap-0.5 font-bold">
        <Svg w={16} h={16} color="#555" sw={1.2}><path d="M6 13A6 6 0 0 1 5 2.500" strokeDasharray="3 1.500" /><path d="M8 2.500 11 5M6 6h9M8 9l7 6M14 8l-7 7" strokeWidth="1.600" /></Svg>
        アクセシビリティ: 検討が必要です
      </button>
      <button type="button" className="ml-auto flex items-center">
        <Svg w={17} h={15} color="#444"><path d="M1 1h14v9H1z" fill="#444" /><path d="M4 13.500h5" /><circle cx="12" cy="10.500" r="3" fill="#f3f3f3" strokeWidth="1.800" strokeDasharray="1.600 .8" /><circle cx="12" cy="10.500" r="1.500" /></Svg>
        表示設定
      </button>
      <Tool w="ml-[34px] w-[14px]" label="標準"><Svg w={13} h={13} color="#777"><path d="M0.500 0.500h12v12H0.500zM4.500 0.500v12M8.500 0.500v12M0.500 4.500h12M0.500 8.500h12" /></Svg></Tool>
      <Tool w="ml-[26px] w-[14px]" label="ページ レイアウト表示"><Svg w={14} h={13} color="#777"><path d="M0.500 0.500h13v12H0.500zM3.500 2.500h7v8h-7zM5 4.500h4M5 6.500h4M5 8.500h4" /></Svg></Tool>
      <Tool w="ml-[26px] w-[14px]" label="改ページ プレビュー"><Svg w={14} h={13} color="#777"><path d="M0.500 0.500h13v12H0.500zM4.500 0.500v7h5v-7M7 0.500v7" /></Svg></Tool>
      <Tool w="ml-[17px] w-3 text-[#999]" label="縮小"><Svg w={8} h={8} color="#b5b5b5"><path d="M0 4.500h8" /></Svg></Tool>
      <input
        type="range"
        aria-label="ズーム"
        min="10"
        max="400"
        defaultValue="205"
        className="ml-[3px] h-3 w-[100px] appearance-none bg-[linear-gradient(#555,#555)] bg-[length:100%_1px] bg-center bg-no-repeat [&::-webkit-slider-thumb]:h-[6px] [&::-webkit-slider-thumb]:w-[2px] [&::-webkit-slider-thumb]:appearance-none [&::-webkit-slider-thumb]:bg-[#444]"
      />
      <Tool w="ml-1 w-3" label="拡大"><Svg w={8} h={8} color="#b5b5b5"><path d="M0 4.500h8M4.500 0v8" /></Svg></Tool>
      <span className="w-[43px] text-right text-[13px] text-[#b0b0b0]">235%</span>
    </footer>
  );
}

export default function App() {
  return (
    <div className="min-h-screen bg-white pt-[6px] pr-[5px] pb-[7px] pl-[7px] font-['Noto_Sans','Noto_Sans_CJK_JP',sans-serif] [font-feature-settings:'palt']">
      <main className="overflow-hidden rounded-lg border-x border-b border-[#3f7f60] bg-[#217346]">
        <TitleBar />
        <RibbonTabs />
        <Ribbon />
        <FormulaBar />
        <Sheet />
        <SheetTabs />
        <StatusBar />
      </main>
    </div>
  );
}
